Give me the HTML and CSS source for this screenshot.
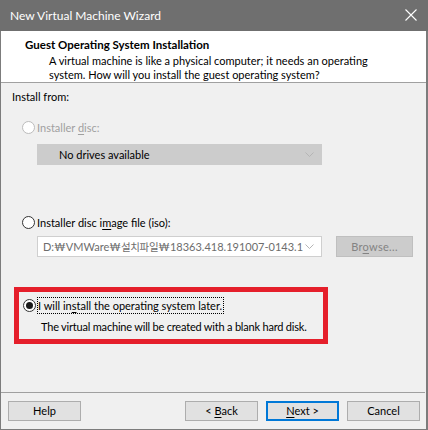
FILE: index.html
```html
<!DOCTYPE html>
<html>
<head>
<meta charset="utf-8">
<link rel="stylesheet" href="styles.css">
</head>
<body>
<div class="window">
  <div class="titlebar">
    <span class="title">New Virtual Machine Wizard</span>
    <svg class="close" width="12" height="12" viewBox="0 0 12 12"><path d="M0.5 0.5 L11.5 11.5 M11.5 0.5 L0.5 11.5" stroke="#fff" stroke-width="1.1" fill="none"/></svg>
  </div>
  <div class="header">
    <div class="h-title">Guest Operating System Installation</div>
    <div class="h-desc">A virtual machine is like a physical computer; it needs an operating<br>system. How will you install the guest operating system?</div>
  </div>
  <div class="body">
    <div class="label">Install from:</div>
    <div class="option disabled"><span class="radio"></span><span class="otext">Installer <u>d</u>isc:</span></div>
    <div class="select disabled-select"><span class="stext">No drives available</span><svg class="chev" width="9" height="5" viewBox="0 0 9 5"><path d="M0.5 0.5 L4.5 4.5 L8.5 0.5" stroke="#b5b5b5" fill="none"/></svg></div>
    <div class="option opt2"><span class="radio on"></span><span class="otext">Installer disc i<u>m</u>age file (iso):</span></div>
    <div class="row">
      <div class="select combo"><span class="ctext">D:₩VMWare₩<span class="ko">설치파일</span>₩18363.418.191007-0143.19</span><svg class="chev" width="9" height="5" viewBox="0 0 9 5"><path d="M0.5 0.5 L4.5 4.5 L8.5 0.5" stroke="#b5b5b5" fill="none"/></svg></div>
      <div class="btn browse"><span>Br<u>o</u>wse...</span></div>
    </div>
    <div class="highlight">
      <div class="option opt3"><span class="radio on checked"></span><span class="otext focus">I will in<u>s</u>tall the operating system later.</span></div>
      <div class="note">The virtual machine will be created with a blank hard disk.</div>
    </div>
  </div>
  <div class="footer">
    <div class="btn"><span>Help</span></div>
    <div class="spacer"></div>
    <div class="btn"><span>&lt; <u>B</u>ack</span></div>
    <div class="btn default"><span><u>N</u>ext &gt;</span></div>
    <div class="btn"><span>Cancel</span></div>
  </div>
</div>
</body>
</html>
```
FILE: styles.css
```css
html, body {
  margin: 0;
  padding: 0;
  background: #f0f0f0;
}
body {
  font-family: "Lato", "Noto Sans CJK KR", sans-serif;
  font-size: 11px;
  color: #000;
}
u {
  text-decoration: underline;
  text-underline-offset: 2px;
}
.window {
  width: 428px;
  height: 430px;
  box-sizing: border-box;
  border-left: 1px solid #7c7c7c;
  border-right: 2px solid #7c7c7c;
  border-bottom: 1px solid #7c7c7c;
  display: flex;
  flex-direction: column;
  background: #f0f0f0;
}
.titlebar {
  height: 31px;
  margin-left: -1px;
  margin-right: -2px;
  background: #6f6f6f;
  display: flex;
  align-items: center;
  padding: 0 10px 0 10px;
  color: #fff;
  font-size: 12px;
}
.title {
  flex: 1;
  margin-top: -1px;
}
.close {
  margin-right: 1px;
  margin-top: -1px;
}
.header {
  height: 52px;
  background: #fff;
  border-bottom: 1px solid #a0a0a0;
  padding: 6px 0 0 24px;
  box-sizing: border-box;
}
.h-title {
  font-weight: bold;
  line-height: 16px;
  font-size: 11.5px;
}
.h-desc {
  padding-left: 24px;
  line-height: 13.5px;
  margin-top: 1px;
}
.body {
  height: 310px;
  box-sizing: border-box;
  padding: 6px 0 0 11px;
  border-bottom: 1px solid #a0a0a0;
  margin-right: 1px;
}
.label {
  line-height: 16px;
}
.option {
  display: flex;
  align-items: center;
  height: 16px;
  margin-top: 14px;
  margin-left: 10px;
}
.option.opt2 {
  margin-top: 49px;
}
.radio {
  width: 13px;
  height: 13px;
  box-sizing: border-box;
  border-radius: 50%;
  border: 1px solid #bcbcbc;
  background: #fff;
  margin-right: 2px;
  display: flex;
  align-items: center;
  justify-content: center;
}
.radio.on {
  border-color: #333;
}
.radio.checked::after {
  content: "";
  width: 7px;
  height: 7px;
  border-radius: 50%;
  background: #1a1a1a;
}
.disabled .otext {
  color: #a0a0a0;
}
.select {
  width: 285px;
  height: 21px;
  box-sizing: border-box;
  margin-left: 25px;
  display: flex;
  align-items: center;
  padding: 0 4px 0 4px;
}
.disabled-select {
  margin-top: 9px;
  background: #cccccc;
  border: 1px solid #cccccc;
  padding-left: 21px;
}
.stext {
  flex: 1;
}
.chev {
  flex: none;
  margin-right: 3px;
}
.row {
  display: flex;
  margin-top: 6px;
  gap: 14px;
}
.combo {
  background: #fff;
  border: 1px solid #cfcfcf;
  padding-left: 5px;
}
.ctext {
  flex: 1;
  color: #6d6d6d;
  white-space: nowrap;
  overflow: hidden;
  margin-right: 2px;
}
.ko {
  font-size: 10.5px;
  letter-spacing: -0.3px;
}
.btn {
  width: 73px;
  height: 20px;
  box-sizing: border-box;
  background: #e1e1e1;
  border: 1px solid #adadad;
  display: flex;
  align-items: center;
  justify-content: center;
  line-height: 16px;
  white-space: pre;
}
.btn.browse {
  width: 77px;
  height: 21px;
  background: #cccccc;
  border-color: #bfbfbf;
  color: #838383;
  letter-spacing: 0.3px;
}
.btn.default {
  border: 2px solid #0078d7;
}
.highlight {
  margin-top: 30px;
  margin-left: 2px;
  width: 314px;
  height: 57px;
  box-sizing: border-box;
  border: 5px solid #e51f2b;
}
.option.opt3 {
  margin-top: 5px;
  margin-left: 4px;
}
.focus {
  outline: 1px dotted #000;
  outline-offset: 0px;
  line-height: 15px;
  padding-right: 1px;
}
.note {
  margin-left: 22px;
  margin-top: 6px;
  line-height: 16px;
  white-space: nowrap;
  letter-spacing: -0.2px;
}
.footer {
  flex: 1;
  display: flex;
  align-items: flex-start;
  padding: 8px 6px 0 7px;
  gap: 8px;
}
.spacer {
  flex: 1;
}
```
